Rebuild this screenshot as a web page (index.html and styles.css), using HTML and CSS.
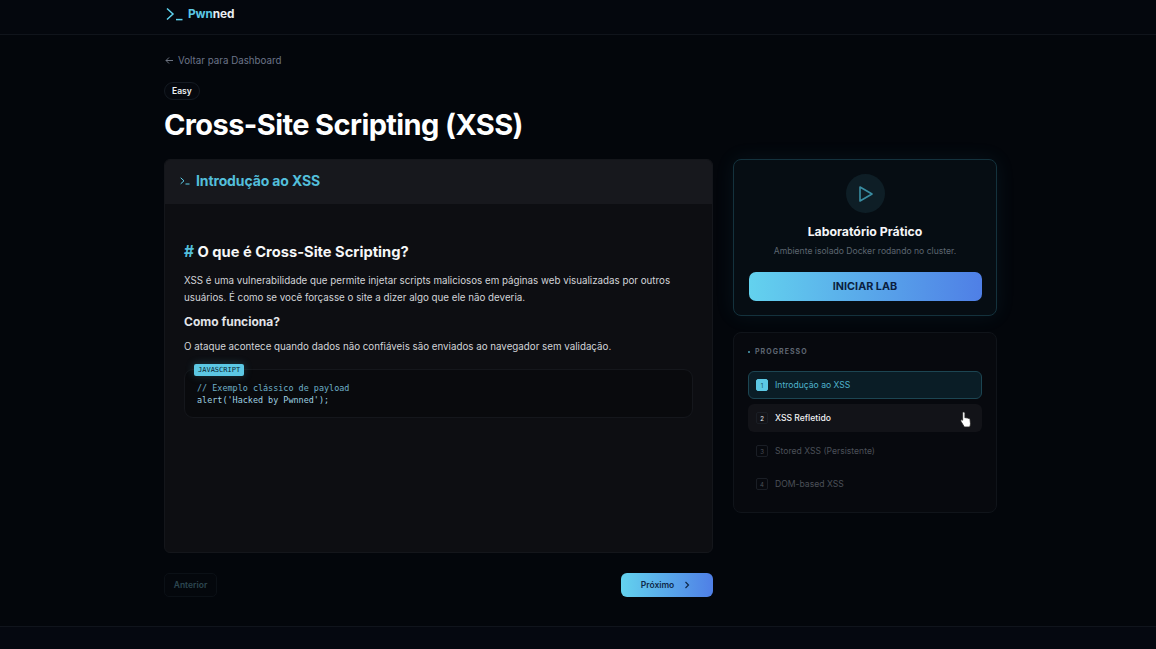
FILE: index.html
```html
<!DOCTYPE html>
<html lang="pt-BR">
<head>
<meta charset="utf-8">
<title>Cross-Site Scripting (XSS)</title>
<link rel="stylesheet" href="styles.css">
</head>
<body>
<header class="nav">
  <div class="nav-inner">
    <svg class="logo-icon" width="17" height="14" viewBox="0 0 17 14" fill="none"><path d="M1 1.500 7 7 1 12.500" stroke="#5fd3ee" stroke-width="1.500"/><path d="M10 12.600h6.500" stroke="#5fd3ee" stroke-width="1.500"/></svg>
    <span class="logo-text"><span class="logo-a">Pwn</span>ned</span>
  </div>
</header>
<main class="page">
  <a class="back"><svg width="9" height="9" viewBox="0 0 9 9" fill="none"><path d="M8 4.500H1M4 1.500l-3 3 3 3" stroke="#6b7280" stroke-width="1"/></svg>Voltar para Dashboard</a>
  <div class="badge-row"><span class="badge">Easy</span></div>
  <h1 class="title">Cross-Site Scripting (XSS)</h1>
  <div class="columns">
    <section class="left">
      <article class="card">
        <div class="card-head">
          <svg width="10" height="8" viewBox="0 0 10 8" fill="none"><path d="M.7.8 4 3.800.7 6.800" stroke="#5fd3ee" stroke-width="1"/><path d="M5.500 7h4" stroke="#5fd3ee" stroke-width="1"/></svg>
          <h2 class="card-title">Introdução ao XSS</h2>
        </div>
        <div class="card-body">
          <h3 class="h-main"><span class="hash">#</span> O que é Cross-Site Scripting?</h3>
          <p class="para">XSS é uma vulnerabilidade que permite injetar scripts maliciosos em páginas web visualizadas por outros usuários. É como se você forçasse o site a dizer algo que ele não deveria.</p>
          <h4 class="h-sub">Como funciona?</h4>
          <p class="para">O ataque acontece quando dados não confiáveis são enviados ao navegador sem validação.</p>
          <div class="code">
            <span class="code-tag">JAVASCRIPT</span>
            <pre class="code-text"><span class="comment">// Exemplo clássico de payload</span>
alert('Hacked by Pwnned');</pre>
          </div>
        </div>
      </article>
      <div class="pager">
        <button class="prev">Anterior</button>
        <button class="next">Próximo<svg width="8" height="8" viewBox="0 0 8 8" fill="none"><path d="M2.500 1 5.500 4 2.500 7" stroke="#0f2a4a" stroke-width="1.200"/></svg></button>
      </div>
    </section>
    <aside class="side">
      <div class="lab">
        <div class="play"><svg width="16" height="18" viewBox="0 0 16 18" fill="none"><path d="M2 2 14 9 2 16Z" stroke="#3a8ea3" stroke-width="1.600" stroke-linejoin="round"/></svg></div>
        <h3 class="lab-title">Laboratório Prático</h3>
        <p class="lab-sub">Ambiente isolado Docker rodando no cluster.</p>
        <button class="start">INICIAR LAB</button>
      </div>
      <div class="progress">
        <div class="prog-head"><span class="dot"></span>PROGRESSO</div>
        <ul class="steps">
          <li class="step active"><span class="num">1</span>Introdução ao XSS</li>
          <li class="step hover"><span class="num">2</span>XSS Refletido
            <svg class="cursor" width="13" height="17" viewBox="0 0 11 15"><path d="M3 .8c.7 0 1.100.5 1.100 1.200v4l.8-.1c.4 0 .8.100 1 .4.500-.2 1-.1 1.300.3.600-.2 1.300.2 1.400.8l.4 3.600c.1 1-.2 1.800-.7 3.100H3.600L.7 9.300C.3 8.700.5 8 1 7.800c.4-.2.800 0 1.100.4V2c0-.7.2-1.200.9-1.200Z" fill="#fff" stroke="#222" stroke-width=".7"/></svg>
          </li>
          <li class="step dim"><span class="num">3</span>Stored XSS (Persistente)</li>
          <li class="step dim"><span class="num">4</span>DOM-based XSS</li>
        </ul>
      </div>
    </aside>
  </div>
</main>
<footer class="foot"></footer>
</body>
</html>
```
FILE: styles.css
```css
* { box-sizing: border-box; }
html, body { margin: 0; height: 649px; overflow: hidden; }
body { background: #03060b; color: #fff; font-family: Inter, "Liberation Sans", sans-serif; display: flex; flex-direction: column; }
.nav { height: 35px; border-bottom: 1px solid #10141b; background: #04070d; flex: none; }
.nav-inner { width: 833px; margin-left: 164px; height: 34px; display: flex; align-items: center; padding-left: 2px; padding-bottom: 6px; gap: 5px; }
.logo-text { font-size: 11.800px; font-weight: 700; color: #e8edf2; letter-spacing: -.1px; }
.logo-a { color: #5cc8e4; }
.page { width: 833px; margin-left: 164px; flex: 1; padding-top: 19px; }
.back { display: flex; align-items: center; gap: 4px; font-size: 9.750px; line-height: 13px; color: #6b7488; height: 13px; padding-left: 1px; }
.badge-row { margin-top: 11px; height: 18px; }
.badge { display: inline-flex; align-items: center; height: 18px; padding: 0 7px; border: 1px solid #141a22; border-radius: 9px; font-size: 8.500px; font-weight: 600; color: #eef1f4; background: #05080e; }
.title { margin: 11px 0 0; font-size: 29px; line-height: 36px; font-weight: 700; letter-spacing: -.6px; color: #fff; }
.columns { display: flex; gap: 20px; margin-top: 16px; align-items: flex-start; }
.left { width: 549px; flex: none; }
.card { height: 394px; background: #0d0e12; border: 1px solid #14161b; border-radius: 6px; overflow: hidden; }
.card-head { height: 44px; background: #17181d; display: flex; align-items: center; gap: 6px; padding: 0 0 3px 15px; }
.card-title { margin: 0; font-size: 14px; font-weight: 700; color: #53bfdb; letter-spacing: -.12px; }
.card-body { padding: 38px 19px 0; }
.h-main { margin: 0; font-size: 14.700px; line-height: 20px; font-weight: 700; color: #f6f7f8; }
.hash { color: #53bfdb; font-weight: 700; font-size: 15.500px; }
.para { margin: 0; font-size: 9.770px; line-height: 17px; color: #d2d4d8; }
.h-main + .para { margin-top: 10px; }
.h-sub { margin: 7px 0 8px; font-size: 12px; line-height: 17px; font-weight: 700; color: #e2e4e8; }
.code { position: relative; margin-top: 14px; height: 49px; background: #090a0d; border: 1px solid #15171c; border-radius: 9px; padding: 12px 12px 0; }
.code-tag { position: absolute; left: 9px; top: -6px; height: 12px; padding: 0 4px; display: flex; align-items: center; background: #5cc8e4; color: #0b2530; border-radius: 2px; font-family: "DejaVu Sans Mono", monospace; font-size: 7px; box-shadow: 0 0 8px rgba(92,200,228,.25); }
.code-text { margin: 0; font-family: "DejaVu Sans Mono", "Liberation Mono", monospace; font-size: 8.450px; line-height: 12px; color: #9fd0e0; }
.comment { color: #6fb0c8; }
.pager { display: flex; justify-content: space-between; margin-top: 20px; }
.prev { height: 24px; width: 53px; padding: 0; background: #04070c; border: 1px solid #0b1016; border-radius: 5px; color: #2c4650; font: 600 8.500px Inter, sans-serif; }
.next { height: 24px; width: 92px; padding: 0 2px 0 0; display: flex; align-items: center; justify-content: center; gap: 9px; border: 0; border-radius: 6px; background: linear-gradient(90deg, #63d2ee, #4f7fe6); color: #0f2a4a; font: 600 8.500px Inter, sans-serif; }
.side { width: 264px; flex: none; display: flex; flex-direction: column; gap: 16px; }
.lab { height: 157px; background: #060d13; border: 1px solid #14323d; border-radius: 8px; padding: 14px 15px 0; display: flex; flex-direction: column; align-items: center; box-shadow: 0 0 20px rgba(60,150,190,.09); }
.play { width: 39px; height: 39px; border-radius: 50%; background: #0e1e26; display: flex; align-items: center; justify-content: center; padding-left: 2px; }
.lab-title { margin: 11px 0 0; font-size: 12.300px; line-height: 16px; font-weight: 700; color: #f5f6f8; }
.lab-sub { margin: 5px 0 0; font-size: 8.600px; line-height: 12px; color: #5c6570; }
.start { margin-top: 15px; width: 233px; height: 29px; border: 0; border-radius: 7px; background: linear-gradient(90deg, #63d2ee, #4f7fe6); color: #0b1f40; font: 700 10.800px Inter, sans-serif; }
.progress { height: 181px; background: #07090e; border: 1px solid #10141a; border-radius: 8px; padding: 14px 14px 0; }
.prog-head { display: flex; align-items: center; gap: 5px; font-size: 7px; line-height: 10px; font-weight: 700; letter-spacing: 1.050px; color: #5e6672; }
.dot { width: 2px; height: 2px; border-radius: 50%; background: #4ea3ba; }
.steps { list-style: none; margin: 14px 0 0; padding: 0; display: flex; flex-direction: column; gap: 5px; }
.step { position: relative; height: 28px; display: flex; align-items: center; gap: 7px; padding-left: 7px; border-radius: 6px; font-size: 8.600px; border: 1px solid transparent; }
.num { width: 12px; height: 12px; display: flex; align-items: center; justify-content: center; border: 1px solid #1a1e25; border-radius: 2px; font-size: 6px; }
.active { background: #0a1d26; border-color: #1c4552; color: #4fb3cc; }
.active .num { background: #5cc8e4; border-color: #5cc8e4; color: #14505f; }
.hover { background: #121318; color: #f0f1f3; font-weight: 500; }
.hover .num { color: #e4e5e7; }
.dim { color: #4b5058; }
.dim .num { color: #4b5058; }
.cursor { position: absolute; right: 8px; top: 6px; }
.foot { height: 23px; flex: none; border-top: 1px solid #10141c; background: #050810; }
```
